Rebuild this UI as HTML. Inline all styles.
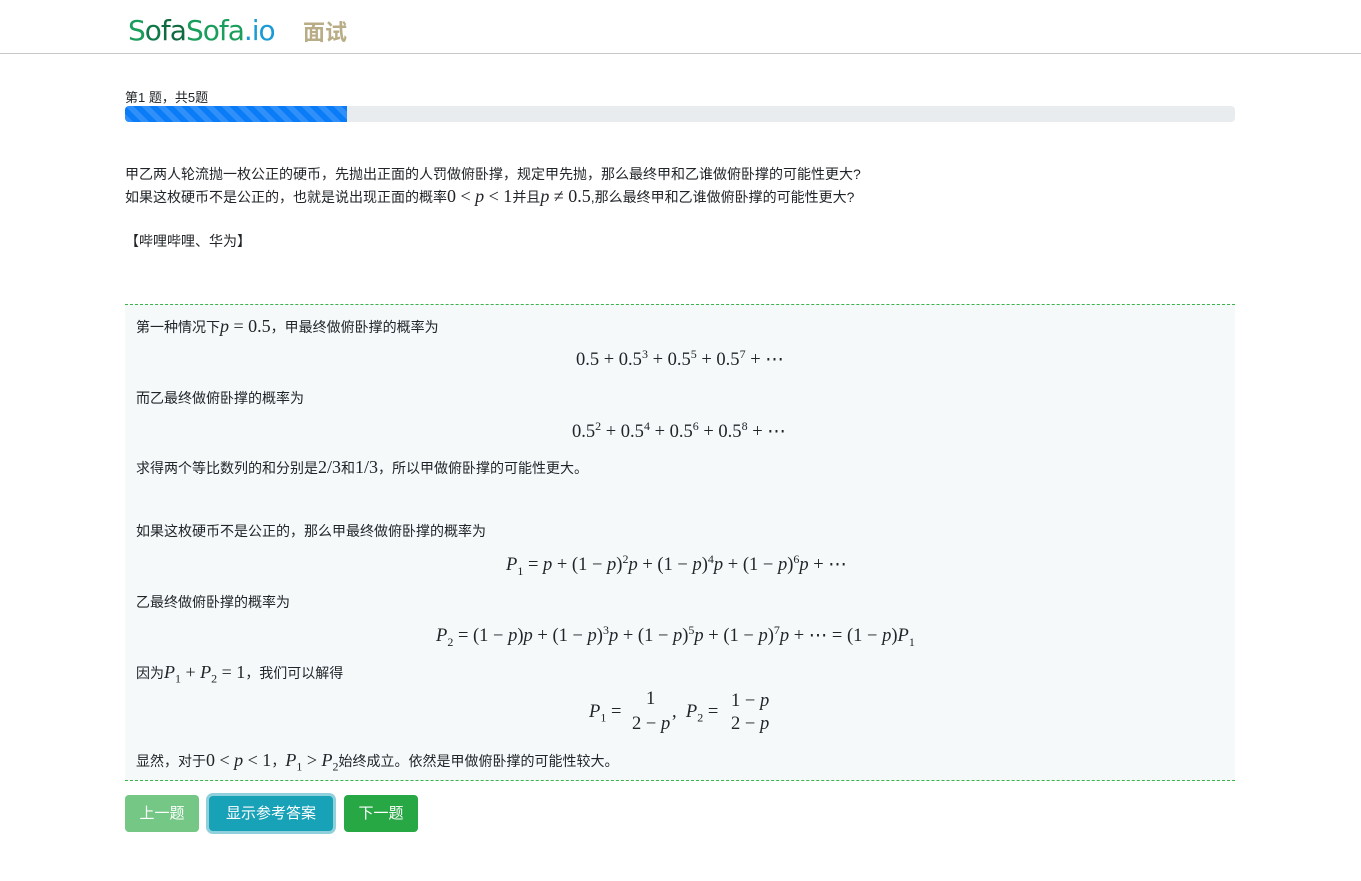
<!DOCTYPE html>
<html><head><meta charset="utf-8"><style>
body{margin:0;background:#fff;font-family:"Liberation Sans","Noto Sans CJK SC",sans-serif;font-size:14px;color:#212529;}
.hdr{height:53px;border-bottom:1px solid #c8c8c8;position:relative;}
.logo{position:absolute;left:128px;top:13px;font-size:28px;font-family:"DejaVu Sans","Liberation Sans",sans-serif;letter-spacing:-1px;line-height:36px}
.ms{position:absolute;left:303px;top:15px;font-size:22px;font-weight:bold;color:#b8ad86;font-family:"Noto Sans CJK SC",sans-serif}
.abs{position:absolute;white-space:nowrap}
.m{font-family:"Liberation Serif",serif;font-size:18px}
.d{font-size:18.5px}
.m i{font-style:italic}
sup,sub{font-size:12px}
.box{position:absolute;left:125px;top:304px;width:1110px;height:475px;background:#f6f9fa;border-top:1px dashed #3cb34a;border-bottom:1px dashed #3cb34a}
.btn{position:absolute;top:795px;height:37px;line-height:37px;color:#fff;font-size:15px;text-align:center;border-radius:4px}
</style></head><body>
<div class="hdr">
<div class="logo"><span style="color:#1a9e5c">S</span><span style="color:#0f7a48">o</span><span style="color:#0f6b3f">fa</span><span style="color:#1a9e5c">Sofa</span><span style="color:#1a9bd7">.io</span></div>
<div class="ms">面试</div>
</div>
<div class="abs" style="left:125px;top:87px;font-size:13px">第1 题，共5题</div>
<div class="abs" style="left:125px;top:106px;width:1110px;height:16px;background:#e9ecef;border-radius:4px;overflow:hidden">
<div style="width:222px;height:16px;background-color:#0a7cf8;background-image:linear-gradient(45deg,rgba(255,255,255,.15) 25%,transparent 25%,transparent 50%,rgba(255,255,255,.15) 50%,rgba(255,255,255,.15) 75%,transparent 75%);background-size:16px 16px"></div></div>
<div class="abs" style="left:125px;top:164px">甲乙两人轮流抛一枚公正的硬币，先抛出正面的人罚做俯卧撑，规定甲先抛，那么最终甲和乙谁做俯卧撑的可能性更大?</div>
<div class="abs" style="left:125px;top:186px">如果这枚硬币不是公正的，也就是说出现正面的概率<span class="m">0 &lt; <i>p</i> &lt; 1</span>并且<span class="m"><i>p</i> ≠ 0.5</span>,那么最终甲和乙谁做俯卧撑的可能性更大?</div>
<div class="abs" style="left:125px;top:231px">【哔哩哔哩、华为】</div>
<div class="box"></div>
<div class="abs" style="left:136px;top:316px">第一种情况下<span class="m"><i>p</i> = 0.5</span>，甲最终做俯卧撑的概率为</div>
<div class="abs m d" style="left:576px;top:347px">0.5 + 0.5<sup>3</sup> + 0.5<sup>5</sup> + 0.5<sup>7</sup> + ⋯</div>
<div class="abs" style="left:136px;top:388px">而乙最终做俯卧撑的概率为</div>
<div class="abs m d" style="left:572px;top:419px">0.5<sup>2</sup> + 0.5<sup>4</sup> + 0.5<sup>6</sup> + 0.5<sup>8</sup> + ⋯</div>
<div class="abs" style="left:136px;top:457px">求得两个等比数列的和分别是<span class="m">2/3</span>和<span class="m">1/3</span>，所以甲做俯卧撑的可能性更大。</div>
<div class="abs" style="left:136px;top:521px">如果这枚硬币不是公正的，那么甲最终做俯卧撑的概率为</div>
<div class="abs m d" style="left:506px;top:552px"><i>P</i><sub>1</sub> = <i>p</i> + (1 − <i>p</i>)<sup>2</sup><i>p</i> + (1 − <i>p</i>)<sup>4</sup><i>p</i> + (1 − <i>p</i>)<sup>6</sup><i>p</i> + ⋯</div>
<div class="abs" style="left:136px;top:592px">乙最终做俯卧撑的概率为</div>
<div class="abs m d" style="left:436px;top:623px"><i>P</i><sub>2</sub> = (1 − <i>p</i>)<i>p</i> + (1 − <i>p</i>)<sup>3</sup><i>p</i> + (1 − <i>p</i>)<sup>5</sup><i>p</i> + (1 − <i>p</i>)<sup>7</sup><i>p</i> + ⋯ = (1 − <i>p</i>)<i>P</i><sub>1</sub></div>
<div class="abs" style="left:136px;top:662px">因为<span class="m"><i>P</i><sub>1</sub> + <i>P</i><sub>2</sub> = 1</span>，我们可以解得</div>
<div class="abs m d" style="left:589px;top:702px"><i>P</i><sub>1</sub> =</div>
<div class="abs m d" style="left:646px;top:689px">1</div>
<div class="abs m d" style="left:632px;top:714px">2 − <i>p</i></div>
<div class="abs m d" style="left:672px;top:702px">, &nbsp;<i>P</i><sub>2</sub> =</div>
<div class="abs m d" style="left:731px;top:691px">1 − <i>p</i></div>
<div class="abs m d" style="left:731px;top:714px">2 − <i>p</i></div>
<div class="abs" style="left:136px;top:750px">显然，对于<span class="m">0 &lt; <i>p</i> &lt; 1</span>，<span class="m"><i>P</i><sub>1</sub> &gt; <i>P</i><sub>2</sub></span>始终成立。依然是甲做俯卧撑的可能性较大。</div>
<div class="btn" style="left:125px;width:74px;background:#74c785">上一题</div>
<div class="btn" style="left:209px;width:124px;background:#17a2b8;box-shadow:0 0 0 3px #8fd0dc;top:796px;height:35px;line-height:35px">显示参考答案</div>
<div class="btn" style="left:344px;width:74px;background:#28a745">下一题</div>
</body></html>
